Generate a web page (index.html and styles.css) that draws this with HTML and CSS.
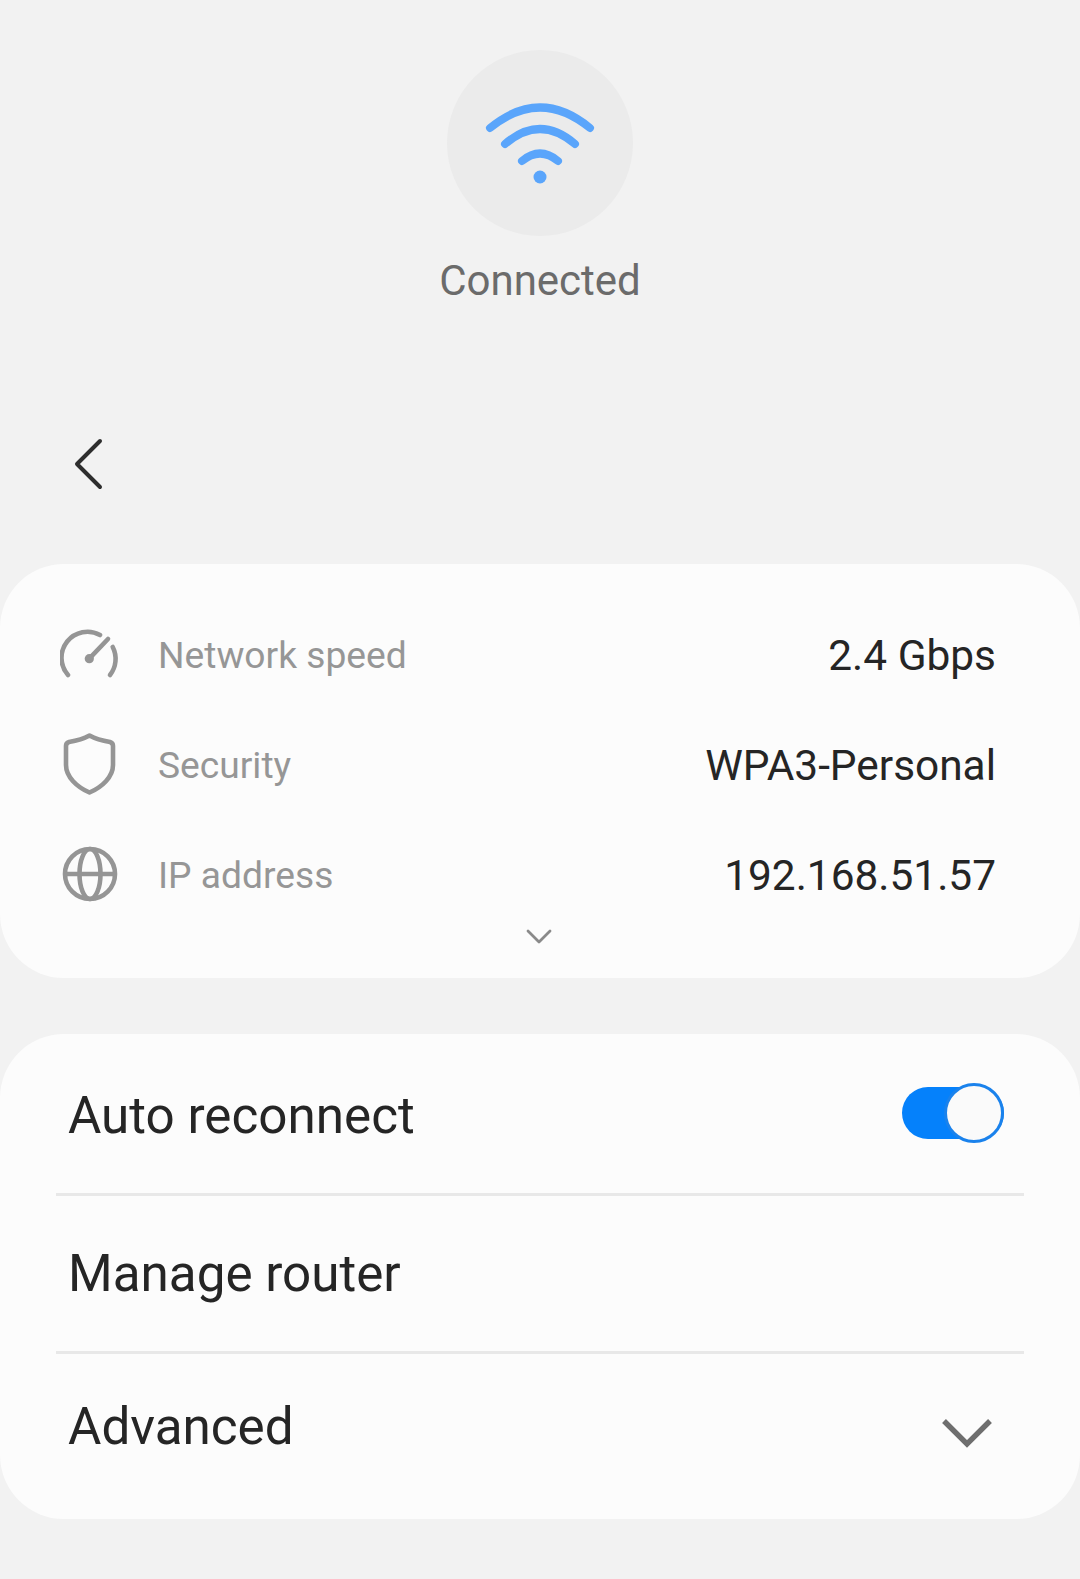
FILE: index.html
```html
<!DOCTYPE html>
<html lang="en">
<head>
<meta charset="utf-8">
<title>Wi-Fi details</title>
<link rel="stylesheet" href="styles.css">
</head>
<body>
<main class="page">
  <header class="status">
    <div class="status-circle">
      <svg class="wifi-icon" viewBox="0 0 110 84" width="110" height="84" fill="none" stroke="#5aa5fb" stroke-width="8" stroke-linecap="round">
        <path d="M5 26Q55 -15 105 26"/>
        <path d="M20 42Q55 12 90 42"/>
        <path d="M37 59Q55 44 73 59"/>
        <circle cx="55" cy="75" r="6.5" fill="#5aa5fb" stroke="none"/>
      </svg>
    </div>
    <div class="status-label">Connected</div>
  </header>
  <nav class="nav">
    <svg viewBox="0 0 32 54" width="32" height="54" fill="none" stroke="#2e2e2e" stroke-width="4" stroke-linecap="round" stroke-linejoin="round">
      <path d="M27 4L4 27L27 50"/>
    </svg>
  </nav>
  <section class="card info">
    <div class="info-row">
      <svg class="info-icon" viewBox="0 -7 60 70" width="60" height="70" fill="none" stroke="#959595" stroke-width="4.6" stroke-linecap="round">
        <path d="M8 48A26 26 0 0 1 40 8"/>
        <path d="M52.7 20A26 26 0 0 1 50 48"/>
        <path d="M29.3 31.7L48 12"/>
        <circle cx="29.3" cy="31.7" r="4.6" fill="#959595" stroke="none"/>
      </svg>
      <span class="info-key">Network speed</span>
      <span class="info-value">2.4 Gbps</span>
    </div>
    <div class="info-row">
      <svg class="info-icon" viewBox="0 -7 60 70" width="60" height="70" fill="none" stroke="#959595" stroke-width="4.6" stroke-linejoin="round">
        <path d="M29.5 -1.5C34 1 44 4 50 5Q53 6 53 9V28C53 40 42 50 29.5 55.5C17 50 6 40 6 28V9Q6 6 9 5C15 4 25 1 29.5 -1.5Z"/>
      </svg>
      <span class="info-key">Security</span>
      <span class="info-value">WPA3-Personal</span>
    </div>
    <div class="info-row">
      <svg class="info-icon" viewBox="0 -7 60 70" width="60" height="70" fill="none" stroke="#959595" stroke-width="4.6">
        <circle cx="30" cy="27" r="25"/>
        <ellipse cx="30" cy="27" rx="10.5" ry="25"/>
        <path d="M5 27H55"/>
      </svg>
      <span class="info-key">IP address</span>
      <span class="info-value">192.168.51.57</span>
    </div>
    <svg class="more" viewBox="0 0 26 16" width="26" height="16" fill="none" stroke="#8a8a8a" stroke-width="2.8" stroke-linecap="round" stroke-linejoin="round">
      <path d="M2 3L13 14L24 3"/>
    </svg>
  </section>
  <section class="card settings">
    <div class="setting setting-first">
      <span class="setting-label">Auto reconnect</span>
      <span class="switch"><span class="knob"></span></span>
    </div>
    <div class="setting setting-mid">
      <span class="setting-label">Manage router</span>
    </div>
    <div class="setting setting-last">
      <span class="setting-label">Advanced</span>
      <svg class="advanced-chevron" viewBox="0 0 54 34" width="54" height="34" fill="none" stroke="#6e6e6e" stroke-width="5.4" stroke-linejoin="miter">
        <path d="M4 4L27 27L50 4"/>
      </svg>
    </div>
  </section>
</main>
</body>
</html>
```
FILE: styles.css
```css
* { box-sizing: border-box; }
html, body { margin: 0; padding: 0; }
body {
  width: 1080px;
  height: 1579px;
  background: #f2f2f2;
  font-family: Roboto, "Noto Sans", sans-serif;
  overflow: hidden;
}
.page { display: flex; flex-direction: column; }
.status { display: flex; flex-direction: column; align-items: center; padding-top: 50px; }
.status-circle {
  width: 186px; height: 186px; border-radius: 50%;
  background: #ebebeb;
  display: flex; align-items: center; justify-content: center;
  padding-top: 2px;
}
.status-label { margin-top: 20px; font-size: 42px; line-height: 50px; color: #6b6b6b; }
.nav { height: 258px; padding: 131px 0 0 73px; }
.nav svg { display: block; }
.card { background: #fcfcfc; border-radius: 64px; }
.info { height: 414px; padding: 36px 0 0; position: relative; }
.info-row { display: flex; align-items: center; height: 110px; padding: 0 84px 0 60px; }
.info-icon { flex: none; }
.info-key { margin-left: 38px; font-size: 37.2px; color: #969696; }
.info-value { margin-left: auto; font-size: 42.4px; color: #252525; }
.more { position: absolute; left: 526px; top: 364px; }
.settings { margin-top: 56px; height: 485px; }
.setting { display: flex; align-items: center; justify-content: space-between; margin: 0 56px; padding: 0 12px; }
.setting-first { height: 162px; padding-top: 4px; border-bottom: 3px solid #e8e8e8; }
.setting-mid { height: 158px; border-bottom: 3px solid #e8e8e8; }
.setting-last { height: 144px; padding-right: 30px; }
.setting-label { font-size: 51.2px; color: #252525; }
.switch {
  width: 102px; height: 52px; border-radius: 26px; background: #0581fb;
  position: relative; margin: -6px 8px 0 0;
}
.knob {
  position: absolute; right: 0; top: -4px; width: 60px; height: 60px; border-radius: 50%;
  background: #fafafa; border: 3px solid #1a82ec;
}
.advanced-chevron { margin-top: 16px; }
```
